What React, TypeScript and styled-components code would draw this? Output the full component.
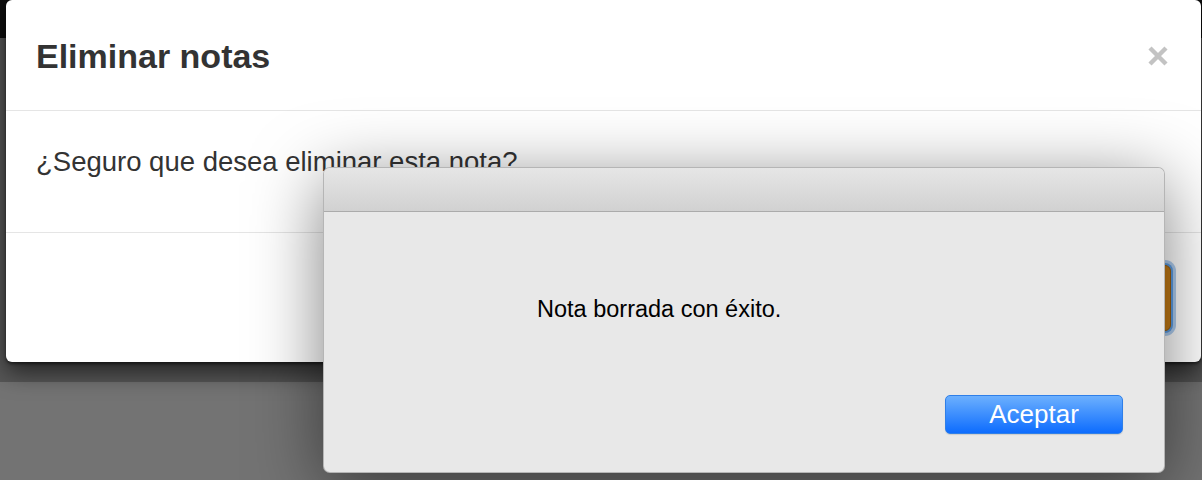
import React from "react";
import styled, { createGlobalStyle } from "styled-components";

const GlobalStyle = createGlobalStyle`
  html, body {
    margin: 0;
    padding: 0;
    background: #737373;
    overflow: hidden;
  }
  * {
    box-sizing: border-box;
  }
`;

const Page = styled.div`
  position: relative;
  width: 1202px;
  height: 480px;
  overflow: hidden;
  display: flex;
  flex-direction: column;
  font-family: "Liberation Sans", Arial, sans-serif;
`;

const TopBar = styled.div`
  height: 38px;
  background: #0e0e0e;
`;

const Backdrop = styled.div`
  height: 344px;
  background: #575757;
`;

const Floor = styled.div`
  flex: 1;
  background: #737373;
`;

const Modal = styled.div`
  position: absolute;
  left: 6px;
  top: 0;
  width: 1195px;
  height: 362px;
  background: #fff;
  border-radius: 6px;
  box-shadow: 0 2px 3px rgba(0, 0, 0, 0.5), 0 10px 24px rgba(0, 0, 0, 0.6);
  display: flex;
  flex-direction: column;
`;

const ModalHeader = styled.div`
  height: 111px;
  border-bottom: 1px solid #e5e5e5;
  padding: 0 33px 0 30px;
  display: flex;
  align-items: center;
  justify-content: space-between;
`;

const ModalTitle = styled.h4`
  margin: 0;
  font-size: 34px;
  font-weight: bold;
  color: #333;
  line-height: 1;
  padding-top: 2px;
`;

const CloseButton = styled.button`
  border: 0;
  background: none;
  padding: 0;
  width: 20px;
  height: 20px;
  display: flex;
  margin-top: 2px;
`;

const ModalBody = styled.div`
  height: 122px;
  border-bottom: 1px solid #e5e5e5;
  padding: 32px 30px 0 30px;
  font-size: 27.5px;
  line-height: 1.4;
  color: #333;
`;

const ModalFooter = styled.div`
  flex: 1;
  display: flex;
  justify-content: flex-end;
  padding: 32px 30px 0 0;
`;

const WarningButton = styled.button`
  width: 200px;
  height: 66px;
  border-radius: 6px;
  border: 1px solid #9a5d0c;
  background: #c57c15;
  box-shadow: 0 0 0 2px #5b9ce2, 0 0 0 5px rgba(110, 165, 230, 0.55);
`;

const Alert = styled.div`
  position: absolute;
  left: 323px;
  top: 167px;
  width: 842px;
  height: 306px;
  border-radius: 7px;
  background: #e8e8e8;
  border: 1px solid rgba(0, 0, 0, 0.22);
  box-shadow: 0 14px 70px rgba(0, 0, 0, 0.5);
  display: flex;
  flex-direction: column;
  overflow: hidden;
`;

const AlertTitleBar = styled.div`
  height: 44px;
  flex: none;
  background: linear-gradient(#e6e6e6, #d1d1d1);
  border-bottom: 1px solid #ababab;
`;

const AlertMessage = styled.p`
  margin: 0;
  padding: 83px 0 0 213px;
  font-size: 23.5px;
  line-height: 1.2;
  color: #000;
`;

const AlertActions = styled.div`
  margin-top: auto;
  display: flex;
  justify-content: flex-end;
  padding: 0 41px 38px 0;
`;

const PrimaryButton = styled.button`
  width: 178px;
  height: 39px;
  border-radius: 5px;
  border: 1px solid #2f7fe8;
  background: linear-gradient(#6cb0fe, #0d6cfe);
  color: #fff;
  font-family: "Liberation Sans", Arial, sans-serif;
  font-size: 26px;
  line-height: 1;
  padding: 0 0 1px 0;
  box-shadow: 0 1px 1px rgba(0, 0, 0, 0.12);
`;

const CloseIcon = () => (
  <svg width="20" height="20" viewBox="0 0 20 20">
    <path d="M2 2 L18 18 M18 2 L2 18" stroke="#c3c3c3" strokeWidth="4.4" strokeLinecap="butt" />
  </svg>
);

export default function App() {
  return (
    <>
      <GlobalStyle />
      <Page>
        <TopBar />
        <Backdrop />
        <Floor />
        <Modal>
          <ModalHeader>
            <ModalTitle>Eliminar notas</ModalTitle>
            <CloseButton aria-label="Cerrar">
              <CloseIcon />
            </CloseButton>
          </ModalHeader>
          <ModalBody>¿Seguro que desea eliminar esta nota?</ModalBody>
          <ModalFooter>
            <WarningButton />
          </ModalFooter>
        </Modal>
        <Alert>
          <AlertTitleBar />
          <AlertMessage>Nota borrada con éxito.</AlertMessage>
          <AlertActions>
            <PrimaryButton>Aceptar</PrimaryButton>
          </AlertActions>
        </Alert>
      </Page>
    </>
  );
}
